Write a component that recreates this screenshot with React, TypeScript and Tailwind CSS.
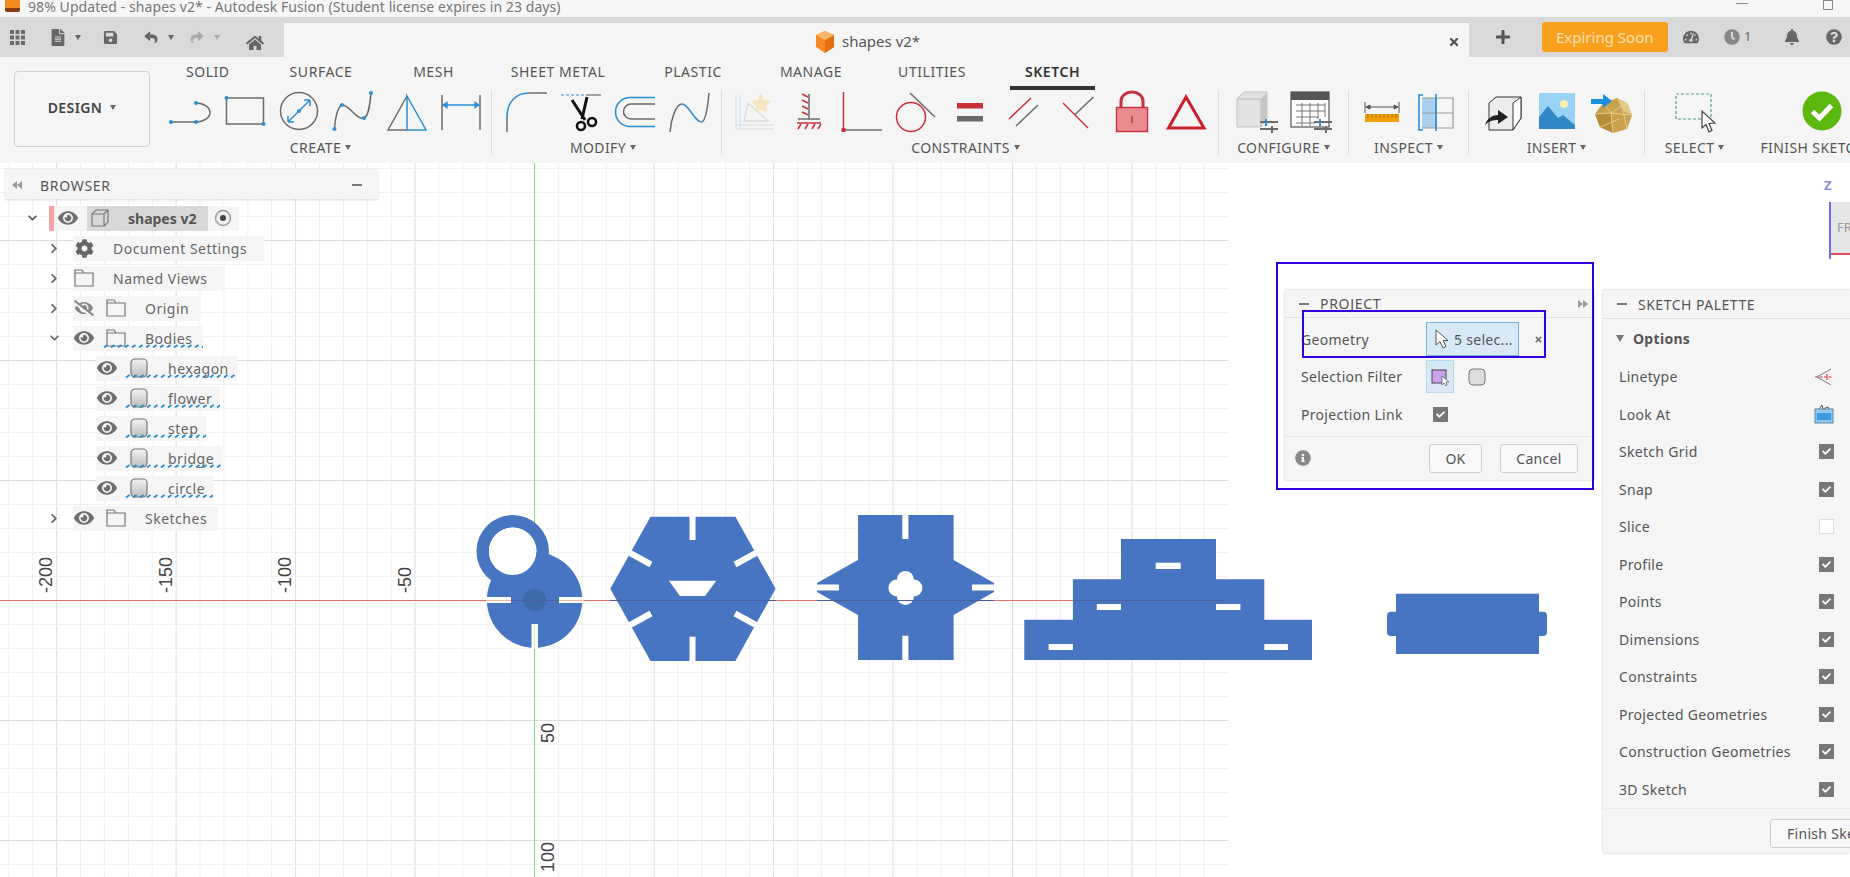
import { ReactNode } from "react";
import {
  FaBell,
  FaCheck,
  FaChevronDown,
  FaChevronRight,
  FaClock,
  FaCog,
  FaEye,
  FaEyeSlash,
  FaFileAlt,
  FaHome,
  FaInfoCircle,
  FaPlus,
  FaQuestionCircle,
  FaReply,
  FaSave,
  FaShare,
  FaTachometerAlt,
  FaTimes,
} from "react-icons/fa";

const BLUE = "#2a8fd6";
const GRAY = "#6b6b6b";
const RED = "#c9303a";

// every ribbon icon is drawn in a 44x44 box
function Ico({ children }: { children: ReactNode }) {
  return (
    <div className="flex w-[54px] justify-center">
      <svg viewBox="0 0 44 44" className="h-[44px] w-[44px]" fill="none">
        {children}
      </svg>
    </div>
  );
}

function Dots({ pts, r = 2 }: { pts: number[][]; r?: number }) {
  return (
    <>
      {pts.map(([x, y]) => (
        <circle key={x + "-" + y} cx={x} cy={y} r={r} fill={BLUE} />
      ))}
    </>
  );
}

function Sliders() {
  return (
    <g strokeWidth="2">
      <path d="M25 33H43" stroke={GRAY} />
      <path d="M25 40H43" stroke={GRAY} />
      <path d="M31 30V37" stroke={BLUE} />
      <path d="M37 37V44" stroke={GRAY} />
    </g>
  );
}

const createIcons = [
  <Ico key="c1">
    <path d="M2 33H27A14 9.5 0 0 0 27 14" stroke={GRAY} strokeWidth="1.5" />
    <Dots pts={[[2, 33], [27, 33], [27, 14]]} />
  </Ico>,
  <Ico key="c2">
    <rect x="3.5" y="9" width="37" height="26" stroke={GRAY} strokeWidth="1.5" />
    <Dots pts={[[3.5, 9], [40.5, 35]]} />
  </Ico>,
  <Ico key="c3">
    <circle cx="22" cy="22" r="18.5" stroke={GRAY} strokeWidth="1.5" />
    <path d="M11 33L33 11M11 33V27M11 33H17M33 11V17M33 11H27" stroke={BLUE} strokeWidth="1.5" />
    <Dots pts={[[22, 22]]} />
  </Ico>,
  <Ico key="c4">
    <path d="M3.5 40C4 28 7 18 11 16C17 14 26 32 33 29C38 27 39 14 40 4" stroke={GRAY} strokeWidth="1.5" />
    <Dots pts={[[3.5, 40], [11, 16], [33, 29], [40, 4]]} />
  </Ico>,
  <Ico key="c5">
    <path d="M22 7L3 41H22" stroke={GRAY} strokeWidth="1.5" />
    <path d="M22 7L41 41H22Z" stroke={BLUE} strokeWidth="1.5" />
  </Ico>,
  <Ico key="c6">
    <path d="M3 6V41M41 6V41" stroke={GRAY} strokeWidth="1.5" />
    <path d="M4 16H40M4 16L8 13.5V18.5ZM40 16L36 13.5V18.5Z" stroke={BLUE} fill={BLUE} strokeWidth="1.3" />
  </Ico>,
];

const modifyIcons = [
  <Ico key="m1">
    <path d="M2 43V28" stroke={GRAY} strokeWidth="1.5" />
    <path d="M2 28C2 14 10 4 24 4" stroke={BLUE} strokeWidth="1.5" />
    <path d="M24 4H42" stroke={GRAY} strokeWidth="1.5" />
  </Ico>,
  <Ico key="m2">
    <path d="M2 6H27" stroke={BLUE} strokeWidth="1.2" strokeDasharray="3 2" />
    <path d="M27 6H42" stroke={GRAY} strokeWidth="1.2" />
    <path d="M13 11L26 31M28 8L23 30" stroke="#111" strokeWidth="3" />
    <circle cx="22" cy="37" r="4" stroke="#111" strokeWidth="2.6" />
    <circle cx="33" cy="33" r="4" stroke="#111" strokeWidth="2.6" />
  </Ico>,
  <Ico key="m3">
    <path d="M42 8.5H17A14.5 14.5 0 0 0 17 37.5H42" stroke={BLUE} strokeWidth="1.6" />
    <path d="M42 15H18A7.5 7.5 0 0 0 18 30H42" stroke={GRAY} strokeWidth="1.6" />
  </Ico>,
  <Ico key="m4">
    <path d="M3 43C4 30 9 15 15 15" stroke={GRAY} strokeWidth="1.5" />
    <path d="M15 15C22 15 28 34 35 33" stroke={BLUE} strokeWidth="1.5" />
    <path d="M35 33C39 31 41 15 42 4" stroke={GRAY} strokeWidth="1.5" />
  </Ico>,
];

const constraintIcons = [
  <Ico key="k1">
    <path d="M4 6V40M8 6V40" stroke="#cfe3f2" strokeWidth="1.2" />
    <path d="M4 36H42M4 40H42" stroke="#dcdcdc" strokeWidth="1.2" />
    <path d="M12 32L16 14L36 32Z" stroke="#dcdcdc" strokeWidth="1.4" />
    <path d="M29 4L32 11L39 12L34 17L35 24L29 20L23 24L24 17L19 12L26 11Z" fill="#f4e7bd" />
  </Ico>,
  <Ico key="k2">
    <path d="M23 5V30M12 30H34" stroke={GRAY} strokeWidth="1.5" />
    <path d="M22 8L16 5M22 14L16 11M22 20L16 17M22 26L16 23" stroke={RED} strokeWidth="1.5" />
    <path d="M11 34H35" stroke={RED} strokeWidth="1.5" />
    <path d="M15 35L12 40M22 35L19 40M29 35L26 40M35 35L32 40" stroke={RED} strokeWidth="1.5" />
  </Ico>,
  <Ico key="k3">
    <path d="M3.5 3V41" stroke={RED} strokeWidth="1.5" />
    <path d="M3.5 41H42" stroke={GRAY} strokeWidth="1.5" />
    <rect x="1.5" y="39" width="4" height="4" fill={RED} />
  </Ico>,
  <Ico key="k4">
    <circle cx="17" cy="28" r="14.5" stroke={RED} strokeWidth="1.5" />
    <path d="M16 4L41 28" stroke={GRAY} strokeWidth="1.5" />
  </Ico>,
  <Ico key="k5">
    <rect x="9" y="14" width="26" height="5.5" fill={RED} />
    <rect x="9" y="27" width="26" height="5.5" fill={GRAY} />
  </Ico>,
  <Ico key="k6">
    <path d="M7 30L29 9" stroke={RED} strokeWidth="1.5" />
    <path d="M14 37L36 16" stroke={GRAY} strokeWidth="1.5" />
  </Ico>,
  <Ico key="k7">
    <path d="M7 14L32 39" stroke={RED} strokeWidth="1.5" />
    <path d="M18.5 26L37.5 8" stroke={GRAY} strokeWidth="1.5" />
  </Ico>,
  <Ico key="k8">
    <path d="M11 18V12A11 9 0 0 1 33 12V18" stroke={RED} strokeWidth="3" />
    <rect x="6.5" y="18.5" width="31" height="24" fill="#e98c90" stroke={RED} strokeWidth="1.4" />
    <path d="M22 27V34" stroke="#a8262e" strokeWidth="1.2" />
  </Ico>,
  <Ico key="k9">
    <path d="M22 8L40 39H4.5Z" stroke="#c9202a" strokeWidth="3" />
  </Ico>,
];

const configureIcons = [
  <Ico key="f1">
    <path d="M2 10L9 3H32V29L26 38H2Z" fill="#e2e2e2" stroke="#c2c2c2" />
    <path d="M2 10H26V38" stroke="#bbb" />
    <path d="M26 10L32 3V29L26 38Z" fill="#c6c6c6" />
    <Sliders />
  </Ico>,
  <Ico key="f2">
    <rect x="2" y="3" width="38" height="35" fill="#fff" stroke="#555" strokeWidth="1.2" />
    <rect x="2" y="3" width="38" height="8" fill="#555" />
    <path d="M7 16H36M7 22H36M7 28H30M7 34H26M13 14V37M21 14V37M29 14V30M36 14V28" stroke="#777" />
    <Sliders />
  </Ico>,
];

const inspectIcons = [
  <Ico key="i1">
    <path d="M5 13V24M39 13V24M6 18H38M6 18L10 16V20ZM38 18L34 16V20Z" stroke="#555" fill="#555" strokeWidth="1" />
    <rect x="5" y="25" width="34" height="8" fill="#f0a000" />
    <path d="M8 25V29M12 25V29M16 25V29M20 25V29M24 25V29M28 25V29M32 25V29M36 25V29" stroke="#a86a00" />
  </Ico>,
  <Ico key="i2">
    <rect x="8" y="9" width="14" height="30" fill="#a9d0ee" />
    <path d="M8 9H39V39H8" stroke="#9a9a9a" strokeWidth="1.2" />
    <path d="M8 24H39M22 9V39" stroke="#9a9a9a" strokeWidth="1.2" />
    <path d="M9 6H5V41H9M22 5V42" stroke={BLUE} strokeWidth="1.6" />
  </Ico>,
];

const insertIcons = [
  <Ico key="n1">
    <path d="M8 14L15 8H40V29L32 41H8Z" fill="#ededed" stroke="#333" strokeWidth="1" />
    <path d="M32 14L40 8V29L32 41Z" fill="#fff" stroke="#333" strokeWidth="1" />
    <path d="M4 36C6 29 12 26 17 26V21L27 28L17 35V31C12 31 8 32 4 36Z" fill="#222" />
  </Ico>,
  <Ico key="n2">
    <rect x="4" y="4" width="36" height="36" fill="#9ad2f5" />
    <circle cx="29" cy="15" r="4" fill="#f6efb0" />
    <path d="M4 40V28L13 17L23 29L28 26L40 36V40Z" fill="#3287c6" />
  </Ico>,
  <Ico key="n3">
    <path d="M14 14L28 9L38 14L43 26L38 40L24 44L11 38L6 25Z" fill="#c9a24e" />
    <path d="M28 9L38 14L43 26L34 22Z" fill="#e2c987" />
    <path d="M6 25L22 24L24 44L11 38Z" fill="#b78d3c" />
    <path d="M14 14L22 24L38 14M22 24L24 44M22 24L6 25M22 24L43 26M11 38L30 30M34 22L38 40" stroke="#e9d59b" strokeWidth="0.8" />
    <path d="M2 10H14V5L23 12L14 19V15H2Z" fill="#1c8fe0" />
  </Ico>,
];

const selectIcon = (
  <Ico key="s1">
    <rect x="3" y="5" width="35" height="25" stroke="#4c9f96" strokeWidth="1.2" strokeDasharray="3 2" />
    <path d="M29 22V39L33 35.5L36 43L39 41.5L36 34.5L42 34Z" fill="#fff" stroke="#444" strokeWidth="1.2" />
  </Ico>
);

const finishIcon = (
  <Ico key="s2">
    <circle cx="22" cy="22" r="19.5" fill="#5cb80d" />
    <path d="M12.5 22.5L19.5 29L31.5 16.5" stroke="#fff" strokeWidth="5" />
  </Ico>
);

function Caret({ color = "#666" }: { color?: string }) {
  return (
    <svg viewBox="0 0 6 5" className="ml-[4px] h-[5px] w-[6px] shrink-0">
      <path d="M0 0H6L3 5Z" fill={color} />
    </svg>
  );
}

function Group({
  label,
  width,
  children,
  caret = true,
  divider = true,
  iconShift = "",
  labelShift = "",
}: {
  label: string;
  width: string;
  children: ReactNode;
  caret?: boolean;
  divider?: boolean;
  iconShift?: string;
  labelShift?: string;
}) {
  return (
    <div className={`${width} flex h-[65px] shrink-0 flex-col items-center ${divider ? "border-l border-[#dedede]" : ""}`}>
      <div className={`-mt-px flex h-[44px] justify-center ${iconShift}`}>{children}</div>
      <div className={`mt-[4px] flex h-[20px] items-center whitespace-nowrap text-[14px] tracking-[0.4px] text-[#555] ${labelShift}`}>
        {label}
        {caret && <Caret />}
      </div>
    </div>
  );
}

const tabs = [
  { name: "SOLID", w: "w-[100.5px]" },
  { name: "SURFACE", w: "w-[126px]" },
  { name: "MESH", w: "w-[99px]" },
  { name: "SHEET METAL", w: "w-[150px]" },
  { name: "PLASTIC", w: "w-[120px]" },
  { name: "MANAGE", w: "w-[116px]" },
  { name: "UTILITIES", w: "w-[126px]" },
  { name: "SKETCH", w: "w-[115px]", active: true },
];

function Ribbon() {
  return (
    <div className="flex h-[106px] bg-[#f5f5f5]">
      <div className="ml-[14px] mt-[14px] flex h-[76px] w-[136px] shrink-0 items-center justify-center rounded-[4px] border border-[#cfcfcf] pb-[3px] text-[14px] font-semibold tracking-[0.4px] text-[#444]">
        DESIGN
        <div className="ml-[4px]">
          <Caret />
        </div>
      </div>
      <div className="flex flex-col">
        <div className="flex h-[33px] pl-[7.5px]">
          {tabs.map((t) => (
            <div key={t.name} className={`${t.w} flex flex-col items-center`}>
              <div className={`h-[29px] whitespace-nowrap pt-[6px] text-[14px] leading-[18px] tracking-[0.55px] ${t.active ? "font-semibold text-[#333]" : "text-[#555]"}`}>
                {t.name}
              </div>
              {t.active && <div className="h-[4px] w-[85px] bg-[#333]" />}
            </div>
          ))}
        </div>
        <div className="flex">
          <Group label="CREATE" width="w-[341px]" divider={false} iconShift="pl-[10px]">{createIcons}</Group>
          <Group label="MODIFY" width="w-[230px]" iconShift="pl-[2px]" labelShift="mr-[7px]">{modifyIcons}</Group>
          <Group label="CONSTRAINTS" width="w-[497px]" labelShift="mr-[9px]">{constraintIcons}</Group>
          <Group label="CONFIGURE" width="w-[130px]">{configureIcons}</Group>
          <Group label="INSPECT" width="w-[120px]">{inspectIcons}</Group>
          <Group label="INSERT" width="w-[176px]">{insertIcons}</Group>
          <Group label="SELECT" width="w-[100px]">{selectIcon}</Group>
          <Group label="FINISH SKETCH" width="w-[156px]" caret={false} divider={false} labelShift="mr-[18px]">{finishIcon}</Group>
        </div>
      </div>
    </div>
  );
}

function TabBar() {
  return (
    <div className="flex h-[40px] bg-[#d9d9d9] text-[#666]">
      <div className="flex w-[284px] shrink-0 items-center pl-[10px]">
        <svg viewBox="0 0 15 15" className="h-[15px] w-[15px]" fill="#6a6a6a">
          {[0, 5.5, 11].flatMap((y) => [0, 5.5, 11].map((x) => <rect key={x + "-" + y} x={x} y={y} width="4" height="4" />))}
        </svg>
        <FaFileAlt className="ml-[26px] h-[17px] w-[14px]" />
        <div className="ml-[6px]"><Caret /></div>
        <FaSave className="ml-[22px] h-[15px] w-[15px]" />
        <FaReply className="ml-[26px] h-[13px] w-[14px]" />
        <div className="ml-[6px]"><Caret /></div>
        <FaShare className="ml-[16px] h-[13px] w-[14px] text-[#aaa]" />
        <div className="ml-[6px]"><Caret color="#aaa" /></div>
        <FaHome className="ml-[26px] mt-[12px] h-[16px] w-[18px]" />
      </div>
      <div className="mt-[6px] flex flex-1 items-center bg-[#f5f5f5] pt-[3px]">
        <svg viewBox="0 0 20 22" className="ml-[531px] h-[22px] w-[20px]">
          <path d="M10 0L19 4V16L10 22L1 16V4Z" fill="#f58a22" />
          <path d="M10 9L19 4V16L10 22Z" fill="#e36f10" />
          <path d="M1 4L10 0L19 4L10 9Z" fill="#fbb56b" />
        </svg>
        <span className="ml-[7px] text-[15px] text-[#555]">shapes v2*</span>
        <FaTimes className="ml-auto mr-[9px] h-[12px] w-[12px] text-[#555]" />
      </div>
      <div className="flex w-[381px] shrink-0 items-center">
        <FaPlus className="ml-[26px] h-[16px] w-[16px] text-[#555]" />
        <div className="ml-[31px] flex h-[30px] w-[125.5px] items-center justify-center rounded-[3px] bg-[#f9a11f] text-[15px] text-[#ffe0b0]">
          Expiring Soon
        </div>
        <FaTachometerAlt className="ml-[15.5px] h-[16px] w-[16px]" />
        <FaClock className="ml-[25px] h-[16px] w-[16px] text-[#888]" />
        <span className="ml-[4px] text-[13px]">1</span>
        <FaBell className="ml-[33px] h-[16px] w-[16px]" />
        <FaQuestionCircle className="ml-[26px] h-[16px] w-[16px]" />
      </div>
    </div>
  );
}

function Folder() {
  return (
    <svg viewBox="0 0 20 18" className="h-[18px] w-[20px]" fill="none">
      <path d="M1 17V1H8L10 4H19V17Z" stroke="#777" strokeWidth="1.2" />
      <path d="M1 4H10" stroke="#777" strokeWidth="1" />
    </svg>
  );
}

function Body() {
  return (
    <svg viewBox="0 0 18 20" className="h-[20px] w-[18px]">
      <defs>
        <linearGradient id="bodyFill" x1="0" y1="0" x2="0" y2="1">
          <stop offset="0" stopColor="#f3f3f3" />
          <stop offset="1" stopColor="#bdbdbd" />
        </linearGradient>
      </defs>
      <rect x="1" y="1" width="16" height="18" rx="4" fill="url(#bodyFill)" stroke="#777" strokeWidth="1.2" />
    </svg>
  );
}

function Eye({ off = false }: { off?: boolean }) {
  return off ? <FaEyeSlash className="h-[18px] w-[20px] text-[#888]" /> : <FaEye className="h-[18px] w-[20px] text-[#6e6e6e]" />;
}

function Squiggle({ left }: { left: string }) {
  return (
    <div className={`absolute ${left} bottom-[3px] right-0 h-[4px]`}>
      <svg className="block h-full w-full">
        <defs>
          <pattern id="squig" width="7" height="4" patternUnits="userSpaceOnUse">
            <path d="M1 3.5L4.5 1" stroke="#1c8ccd" strokeWidth="1.7" />
          </pattern>
        </defs>
        <rect width="100%" height="100%" fill="url(#squig)" />
      </svg>
    </div>
  );
}

function Cell({ children }: { children: ReactNode }) {
  return <div className="flex w-[22px] shrink-0 justify-center">{children}</div>;
}

function TreeRow({
  open,
  eye,
  icon,
  label,
  squiggle,
  nested = false,
}: {
  open?: boolean;
  eye?: ReactNode;
  icon?: ReactNode;
  label: string;
  squiggle?: boolean;
  nested?: boolean;
}) {
  const endPad = nested ? "pr-[8px]" : eye ? "pr-[11px]" : "pr-[17px]";
  return (
    <div className="flex h-[30px] items-center">
      {nested ? (
        <div className="w-[91px] shrink-0" />
      ) : (
        <div className="ml-[37px] mr-[7px] flex w-[24px] shrink-0 justify-center text-[#666]">
          {open ? <FaChevronDown className="h-[10px] w-[11px]" /> : <FaChevronRight className="h-[11px] w-[8px]" />}
        </div>
      )}
      <div className={`relative flex h-[25px] items-center gap-[10px] bg-[#f5f5f5] ${endPad}`}>
        {eye && <Cell>{eye}</Cell>}
        {icon && <Cell>{icon}</Cell>}
        <span className="ml-[8px] whitespace-nowrap text-[14px] tracking-[0.5px] text-[#666]">{label}</span>
        {squiggle && <Squiggle left={nested ? "left-[29px]" : "left-[30px]"} />}
      </div>
    </div>
  );
}

function BrowserPanel() {
  return (
    <div className="absolute left-[5px] top-[6px] w-[373px]">
      <div className="flex h-[30px] items-center bg-[#f5f5f5] pt-[2px] shadow-[0_1px_2px_rgba(0,0,0,0.15)]">
        <svg viewBox="0 0 10 8" className="ml-[7px] h-[8px] w-[10px]" fill="#999">
          <path d="M5 0V8L0 4ZM10 0V8L5 4Z" />
        </svg>
        <span className="ml-[18px] text-[14px] tracking-[0.7px] text-[#555]">BROWSER</span>
        <div className="ml-auto mr-[16px] h-[2px] w-[10px] bg-[#777]" />
      </div>
      <div className="mt-[4px] flex h-[30px] items-center">
        <div className="ml-[15px] flex w-[24px] justify-center text-[#555]">
          <FaChevronDown className="h-[10px] w-[11px]" />
        </div>
        <div className="ml-[5px] flex h-[25px] w-[190px] items-center bg-[#f5f5f5]">
          <div className="h-full w-[5px] bg-[#f5a3a8]" />
          <div className="ml-[4px] flex w-[20px] justify-center"><Eye /></div>
          <div className="ml-[9px] flex h-full w-[121px] items-center bg-[#d8d8d8]">
            <svg viewBox="0 0 20 20" className="ml-[3px] h-[20px] w-[20px]" fill="none" stroke="#777" strokeWidth="1.2">
              <path d="M2 6L6 2H18V14L14 18H2ZM2 6H14V18M14 6L18 2" />
            </svg>
            <span className="ml-[18px] whitespace-nowrap text-[14px] font-bold text-[#555]">shapes v2</span>
          </div>
          <svg viewBox="0 0 18 18" className="ml-[6px] h-[18px] w-[18px]">
            <circle cx="9" cy="9" r="7.5" fill="#eee" stroke="#999" strokeWidth="1.4" />
            <circle cx="9" cy="9" r="3" fill="#444" />
          </svg>
        </div>
      </div>
      <TreeRow icon={<FaCog className="h-[19px] w-[19px] text-[#666]" />} label="Document Settings" />
      <TreeRow icon={<Folder />} label="Named Views" />
      <TreeRow eye={<Eye off />} icon={<Folder />} label="Origin" />
      <TreeRow open eye={<Eye />} icon={<Folder />} label="Bodies" squiggle />
      {["hexagon", "flower", "step", "bridge", "circle"].map((b) => (
        <TreeRow key={b} nested eye={<Eye />} icon={<Body />} label={b} squiggle />
      ))}
      <TreeRow eye={<Eye />} icon={<Folder />} label="Sketches" />
    </div>
  );
}

function Check({ on = true }: { on?: boolean }) {
  return on ? (
    <div className="flex h-[15px] w-[15px] items-center justify-center bg-[#777]">
      <FaCheck className="h-[9px] w-[9px] text-white" />
    </div>
  ) : (
    <div className="h-[15px] w-[15px] border border-[#ddd] bg-white" />
  );
}

function ProjectPanel() {
  return (
    <div className="absolute left-[1285px] top-[127px] h-[190px] w-[309px] bg-[#f5f5f5] text-[14px] tracking-[0.3px] text-[#555] shadow-[0_0_2px_rgba(0,0,0,0.25)]">
      <div className="flex h-[28px] items-center border-b border-[#e2e2e2]">
        <div className="ml-[14px] h-[2px] w-[10px] bg-[#777]" />
        <span className="ml-[11px] text-[14px] tracking-[0.7px]">PROJECT</span>
        <svg viewBox="0 0 10 8" className="ml-auto mr-[6px] h-[8px] w-[10px]" fill="#999">
          <path d="M0 0L5 4L0 8ZM5 0L10 4L5 8Z" />
        </svg>
      </div>
      <div className="mt-[4px] flex h-[34px] items-center pl-[16px]">
        <span className="w-[125px]">Geometry</span>
        <div className="flex h-[34px] w-[93px] items-center border border-[#6fb5de] bg-[#d6e9f5]">
          <svg viewBox="0 0 14 20" className="ml-[8px] h-[20px] w-[14px]">
            <path d="M1 1V16L5 12.5L8 19L11 17.5L8 11.5H13Z" fill="#fff" stroke="#555" />
          </svg>
          <span className="ml-[5px] whitespace-nowrap">5 selec...</span>
        </div>
        <FaTimes className="ml-[15px] h-[9px] w-[9px] text-[#777]" />
      </div>
      <div className="mt-[4px] flex h-[33px] items-center pl-[16px]">
        <span className="w-[125px] whitespace-nowrap">Selection Filter</span>
        <div className="flex h-[33px] w-[28px] items-center justify-center border border-[#b5d9ee] bg-[#d6e9f5]">
          <svg viewBox="0 0 18 18" className="h-[18px] w-[18px]">
            <rect x="1" y="2" width="14" height="13" fill="#cda2ec" stroke="#444" />
            <path d="M11 8V17L13 15L15 18L16 17L15 14H18Z" fill="#fff" stroke="#555" strokeWidth="0.7" />
          </svg>
        </div>
        <svg viewBox="0 0 18 18" className="ml-[14px] h-[18px] w-[18px]">
          <rect x="1" y="1" width="16" height="16" rx="4" fill="#ddd" stroke="#777" />
        </svg>
      </div>
      <div className="mt-[4px] flex h-[34px] items-center pl-[16px]">
        <span className="w-[132px] whitespace-nowrap">Projection Link</span>
        <Check />
      </div>
      <div className="mt-[5px] flex h-[43px] items-center border-t border-[#e6e6e6]">
        <FaInfoCircle className="ml-[10px] h-[16px] w-[16px] text-[#888]" />
        <button className="ml-[118px] h-[29px] w-[53px] rounded-[3px] border border-[#ccc] bg-[#f8f8f8]">OK</button>
        <button className="ml-[18px] h-[29px] w-[78px] rounded-[3px] border border-[#ccc] bg-[#f8f8f8]">Cancel</button>
      </div>
    </div>
  );
}

const paletteRows = [
  "Sketch Grid",
  "Snap",
  "Slice",
  "Profile",
  "Points",
  "Dimensions",
  "Constraints",
  "Projected Geometries",
  "Construction Geometries",
  "3D Sketch",
];

function PaletteRow({ label, children }: { label: string; children: ReactNode }) {
  return (
    <div className="flex h-[37.5px] items-center justify-between pl-[16px] pr-[16px]">
      <span className="whitespace-nowrap">{label}</span>
      {children}
    </div>
  );
}

function SketchPalette() {
  return (
    <div className="absolute left-[1603px] top-[127px] h-[563px] w-[247px] overflow-hidden bg-[#f5f5f5] text-[14px] tracking-[0.3px] text-[#555] shadow-[0_0_2px_rgba(0,0,0,0.25)]">
      <div className="flex h-[29px] items-center border-b border-[#e2e2e2]">
        <div className="ml-[14px] h-[2px] w-[10px] bg-[#777]" />
        <span className="ml-[11px] text-[14px] tracking-[0.5px]">SKETCH PALETTE</span>
      </div>
      <div className="flex h-[39px] items-center">
        <svg viewBox="0 0 8 7" className="ml-[13px] h-[7px] w-[8px]">
          <path d="M0 0H8L4 7Z" fill="#777" />
        </svg>
        <span className="ml-[9px] font-bold">Options</span>
      </div>
      <PaletteRow label="Linetype">
        <svg viewBox="0 0 20 20" className="h-[20px] w-[20px]" fill="none">
          <path d="M1 10H19" stroke={RED} strokeDasharray="3 1.5" />
          <path d="M3 10L17 2M3 10L17 18" stroke="#777" />
          <path d="M13 7V13" stroke={RED} />
        </svg>
      </PaletteRow>
      <PaletteRow label="Look At">
        <svg viewBox="0 0 20 20" className="h-[20px] w-[20px]">
          <path d="M5 5L8 1L9 5L14 3L15 5" fill="none" stroke="#555" />
          <rect x="1" y="5" width="18" height="14" fill="#8fc7ee" stroke="#5d8bab" />
          <rect x="3" y="9" width="14" height="7" fill="#3f9ae0" />
        </svg>
      </PaletteRow>
      {paletteRows.map((r) => (
        <PaletteRow key={r} label={r}>
          <Check on={r !== "Slice"} />
        </PaletteRow>
      ))}
      <div className="h-[45px] border-t border-[#ececec] pl-[167px] pt-[10px]">
        <button className="h-[29px] w-[120px] rounded-[3px] border border-[#ccc] bg-[#f8f8f8] pl-[16px] text-left">Finish Sketch</button>
      </div>
    </div>
  );
}

function ViewCube() {
  return (
    <div className="absolute left-[1822px] top-[14px] h-[82px] w-[28px] overflow-hidden">
      <div className="pl-[2px] text-[13px] font-bold leading-[16px] text-[#8a8ae0]">Z</div>
      <div className="ml-[7px] h-[62px] border-l-2 border-[#6a6af0]">
        <div className="mt-[9px] flex h-[53px] items-center border-b-2 border-[#e0505a] bg-[#e6e6e6] pl-[6px] text-[13px] text-[#999]">
          FR
        </div>
      </div>
    </div>
  );
}

const minorX = Array.from({ length: 52 }, (_, i) => 534.6 + (i - 23) * 23.9).filter((x) => x >= 0 && x <= 1228);
const minorY = Array.from({ length: 31 }, (_, i) => 600.5 + (i - 18) * 24).filter((y) => y >= 163);
const isMajorX = (x: number) => Math.abs(Math.round((x - 534.6) / 23.9)) % 5 === 0;
const isMajorY = (y: number) => Math.round((y - 600.5) / 24) % 5 === 0;

const axisLabels = [
  { t: "-200", x: 51.5, y: 593 },
  { t: "-150", x: 171.5, y: 593 },
  { t: "-100", x: 291, y: 593 },
  { t: "-50", x: 411, y: 593 },
  { t: "50", x: 553.5, y: 743 },
  { t: "100", x: 553.5, y: 872 },
];

const SHAPE = "#4775c2";
// where the red axis runs across a shape it reads dark blue
const axisOverShapes = [[511, 559], [610.3, 776], [817, 994], [1073, 1224]];

function Sketch() {
  return (
    <svg viewBox="0 163 1850 714" className="absolute left-0 top-0 h-[714px] w-[1850px]">
      {minorX.map((x) => (
        <line key={x} x1={x} x2={x} y1={163} y2={877} stroke={isMajorX(x) ? "#dedede" : "#f1f1f1"} />
      ))}
      {minorY.map((y) => (
        <line key={y} x1={0} x2={1228} y1={y} y2={y} stroke={isMajorY(y) ? "#dedede" : "#f1f1f1"} />
      ))}
      <line x1={534.5} x2={534.5} y1={163} y2={877} stroke="#86e086" />
      <line x1={0} x2={1228} y1={600.5} y2={600.5} stroke="#e0705f" />

      {axisLabels.map((l) => (
        <text key={l.t} transform={`translate(${l.x} ${l.y}) rotate(-90)`} fontFamily="Liberation Sans, sans-serif" fontSize="18" fill="#444">
          {l.t}
        </text>
      ))}

      {/* lock */}
      <circle cx="512.7" cy="551.3" r="30" fill="none" stroke={SHAPE} strokeWidth="12.5" />
      <path d="M534.6 552.5A47.5 47.5 0 1 1 512 642L500 616L501 575L519 575Z" fill={SHAPE} />
      <circle cx="534.6" cy="600" r="47.7" fill={SHAPE} />
      <circle cx="512.7" cy="551.3" r="23.7" fill="#fff" />
      <circle cx="534.6" cy="600" r="11.5" fill="#3f69ad" />
      <rect x="486" y="597" width="25" height="6" fill="#fff" />
      <rect x="559" y="597" width="25" height="6" fill="#fff" />
      <rect x="531.5" y="624" width="6.5" height="25" fill="#fff" />
      <line x1={486} x2={511} y1={600.5} y2={600.5} stroke="#f2b6ae" />
      <line x1={559} x2={584} y1={600.5} y2={600.5} stroke="#f2b6ae" />
      <line x1={534.5} x2={534.5} y1={624} y2={649} stroke="#c4efc4" />

      {/* hexagon */}
      <path d="M650.5 516.7H735.4L775.6 588.7L735.4 661H650.5L610.3 588.7Z" fill={SHAPE} />
      <rect x="689.5" y="516" width="6" height="24" fill="#fff" />
      <rect x="689.5" y="636.7" width="6" height="25" fill="#fff" />
      <path d="M756 553L735 564.5M630 553L651 564.5M630 625L651 613.5M756 625L735 613.5" stroke="#fff" strokeWidth="6" />
      <path d="M668.9 580.7H716.3L705 596H680Z" fill="#fff" />

      {/* flower */}
      <path d="M858 515H953.6V560L994 583V592L953.6 615V660H858V615L817 592V583L858 560Z" fill={SHAPE} />
      <rect x="902.3" y="514" width="6.1" height="25" fill="#fff" />
      <rect x="902.3" y="635.7" width="6.1" height="25" fill="#fff" />
      <rect x="816" y="584.5" width="23" height="6" fill="#fff" />
      <rect x="972" y="584.5" width="23" height="6" fill="#fff" />
      <circle cx="905.4" cy="579.5" r="8.5" fill="#fff" />
      <circle cx="905.4" cy="596.5" r="8.5" fill="#fff" />
      <circle cx="896.9" cy="588" r="8.5" fill="#fff" />
      <circle cx="913.9" cy="588" r="8.5" fill="#fff" />
      <circle cx="905.4" cy="588" r="9.5" fill="#fff" />

      {/* step */}
      <path d="M1121 539H1216V579.3H1264.3V619.7H1312V660H1024.3V619.7H1072.9V579.3H1121Z" fill={SHAPE} />
      <rect x="1155.7" y="562.7" width="25" height="6.3" fill="#fff" />
      <rect x="1096.8" y="604" width="24.2" height="6" fill="#fff" />
      <rect x="1216" y="604" width="24.4" height="6" fill="#fff" />
      <rect x="1048.6" y="644" width="24.3" height="6" fill="#fff" />
      <rect x="1264.3" y="644" width="23.6" height="6" fill="#fff" />

      {/* bridge */}
      <rect x="1396" y="593.7" width="143" height="60.3" fill={SHAPE} />
      <rect x="1387" y="611.7" width="160" height="24.3" rx="4" fill={SHAPE} />

      {axisOverShapes.map(([a, b]) => (
        <line key={a} x1={a} x2={b} y1={600.5} y2={600.5} stroke="#4a5f9f" />
      ))}
    </svg>
  );
}

export default function App() {
  return (
    <div className="flex h-[877px] w-[1850px] flex-col overflow-hidden bg-white font-['Noto_Sans',sans-serif]">
      <div className="flex h-[17px] shrink-0 items-center overflow-hidden bg-[#f6f6f6]">
        <div className="ml-[5px] -mt-[8px] h-[14px] w-[15px] rounded-b-[2px] border-b-[4px] border-[#8a3a10] bg-[#f58a22]" />
        <span className="ml-[8px] -mt-[4px] whitespace-nowrap text-[14px] leading-[18px] tracking-[0.08px] text-[#777]">
          98% Updated - shapes v2* - Autodesk Fusion (Student license expires in 23 days)
        </span>
        <div className="ml-auto -mt-[10px] mr-[75px] h-px w-[12px] bg-[#888]" />
        <div className="-mt-[8px] mr-[17px] h-[10px] w-[10px] border border-[#888]" />
      </div>
      <TabBar />
      <Ribbon />
      <div className="relative flex-1">
        <Sketch />
        <BrowserPanel />
        <ProjectPanel />
        <SketchPalette />
        <ViewCube />
        <div className="pointer-events-none absolute left-[1276px] top-[99px] h-[228px] w-[318px] border-2 border-[#3300dd]" />
        <div className="pointer-events-none absolute left-[1302px] top-[147px] h-[48px] w-[244px] border-2 border-[#3300dd]" />
      </div>
    </div>
  );
}
